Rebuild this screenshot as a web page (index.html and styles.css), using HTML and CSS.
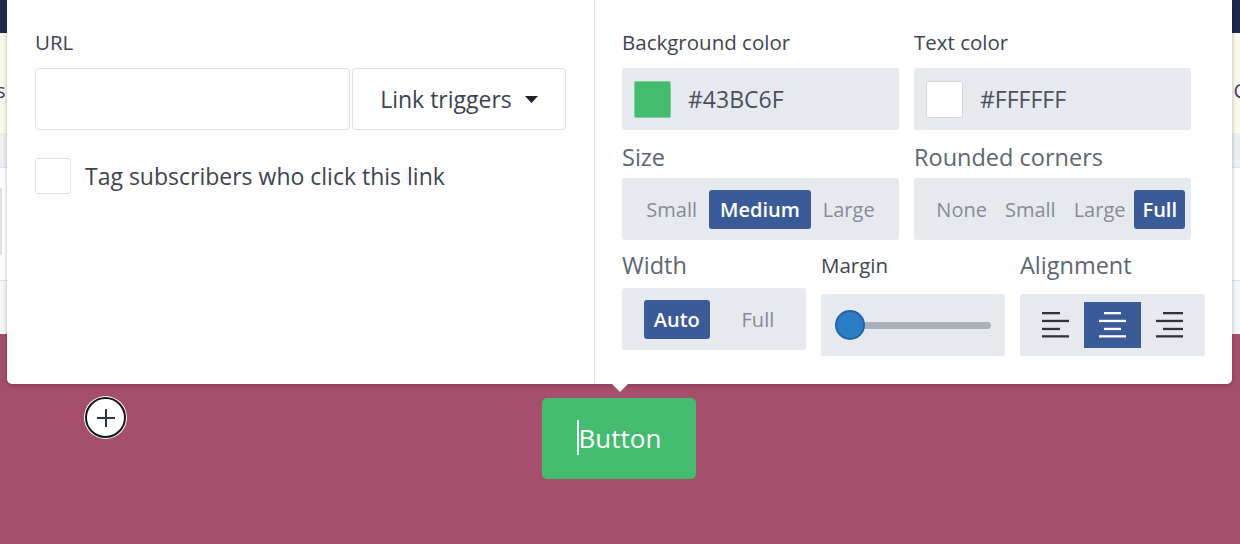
FILE: index.html
```html
<!DOCTYPE html>
<html>
<head>
<meta charset="utf-8">
<link rel="stylesheet" href="styles.css">
</head>
<body>
<div class="page">
  <div class="topbar"></div>
  <div class="notice"><span class="n-left">s</span><span class="n-right">C</span></div>
  <div class="tabs"></div>
  <div class="canvas-top"><div class="card-edge"></div></div>
  <div class="strip"></div>
  <div class="stage">
    <div class="plus-cell">
      <div class="plus">
        <svg width="20" height="20" viewBox="0 0 20 20"><rect x="9" y="1" width="2" height="18" fill="#2e3440"/><rect x="1" y="9" width="18" height="2" fill="#2e3440"/></svg>
      </div>
    </div>
    <div class="cta"><span class="cursor"></span>Button</div>
    <div></div>
  </div>
</div>

<div class="popup">
  <div class="pane-left">
    <div class="lbl">URL</div>
    <div class="url-row">
      <div class="input"></div>
      <div class="trigger"><span>Link triggers</span>
        <svg width="13" height="7" viewBox="0 0 13 7"><path d="M0 0H13L6.5 7Z" fill="#1d2026"/></svg>
      </div>
    </div>
    <div class="check-row"><div class="box"></div><span>Tag subscribers who click this link</span></div>
  </div>
  <div class="pane-right">
    <div class="grid2">
      <div class="col">
        <div class="lbl">Background color</div>
        <div class="field"><div class="swatch sw-green"></div><span>#43BC6F</span></div>
        <div class="lbl-big">Size</div>
        <div class="seg seg-size">
          <span class="opt">Small</span><span class="opt on">Medium</span><span class="opt">Large</span>
        </div>
      </div>
      <div class="col">
        <div class="lbl">Text color</div>
        <div class="field"><div class="swatch sw-white"></div><span>#FFFFFF</span></div>
        <div class="lbl-big">Rounded corners</div>
        <div class="seg seg-corners">
          <span class="opt">None</span><span class="opt">Small</span><span class="opt">Large</span><span class="opt on">Full</span>
        </div>
      </div>
    </div>
    <div class="grid3">
      <div class="col">
        <div class="lbl-big lbl-row3">Width</div>
        <div class="seg seg-width">
          <span class="opt on">Auto</span><span class="opt">Full</span>
        </div>
      </div>
      <div class="col">
        <div class="lbl lbl-row3 lbl-margin">Margin</div>
        <div class="seg seg-low">
          <div class="slider"><div class="track"></div><div class="thumb"></div></div>
        </div>
      </div>
      <div class="col">
        <div class="lbl-big lbl-row3">Alignment</div>
        <div class="seg seg-low seg-align">
          <div class="abtn">
            <svg width="27" height="26" viewBox="0 0 27 26"><g fill="#2f3440"><rect x="0" y="0" width="18" height="2.3"/><rect x="0" y="7.8" width="27" height="2.3"/><rect x="0" y="15.8" width="18" height="2.3"/><rect x="0" y="23.2" width="27" height="2.3"/></g></svg>
          </div>
          <div class="abtn on">
            <svg width="27" height="26" viewBox="0 0 27 26"><g fill="#ffffff"><rect x="5" y="0" width="17" height="2.3"/><rect x="0" y="7.8" width="27" height="2.3"/><rect x="5" y="15.8" width="17" height="2.3"/><rect x="0" y="23.2" width="27" height="2.3"/></g></svg>
          </div>
          <div class="abtn">
            <svg width="27" height="26" viewBox="0 0 27 26"><g fill="#2f3440"><rect x="7" y="0" width="20" height="2.3"/><rect x="0" y="7.8" width="27" height="2.3"/><rect x="7" y="15.8" width="20" height="2.3"/><rect x="0" y="23.2" width="27" height="2.3"/></g></svg>
          </div>
        </div>
      </div>
    </div>
  </div>
</div>
</body>
</html>
```
FILE: styles.css
```css
* { box-sizing: border-box; margin: 0; padding: 0; }
html, body { width: 1240px; height: 544px; overflow: hidden; }
body {
  position: relative;
  font-family: "Open Sans", "Noto Sans", sans-serif;
  background: #fff;
  color: #3f4550;
}
.page { display: flex; flex-direction: column; height: 544px; }
.topbar { height: 33px; background: #1f2b4d; flex: none; }
.notice {
  height: 100px; flex: none; background: #fbf8ec;
  display: flex; align-items: center; justify-content: space-between;
  padding-top: 14px; font-size: 20px; color: #3d4166;
}
.n-left { margin-left: -4px; }
.n-right { margin-right: -6px; }
.tabs { height: 35px; flex: none; background: #edf0f3; border-bottom: 1px solid #dfe3e8; }
.canvas-top { height: 112px; flex: none; background: #fff; padding-top: 20px; }
.card-edge { height: 67px; width: 40px; border-left: 2px solid #dfe3e8; }
.strip { height: 54px; flex: none; background: #f4f6f8; border-top: 1px solid #dfe3e8; }
.stage {
  flex: 1; background: #a64f6c;
  display: grid; grid-template-columns: 542px 154px 1fr;
  align-items: start; padding-top: 64px;
}
.plus-cell { padding-left: 85px; margin-top: -1px; }
.plus {
  width: 41px; height: 41px; border-radius: 50%;
  background: #fff; border: 2px solid #15171c;
  box-shadow: 0 0 0 1px #fff;
  display: flex; align-items: center; justify-content: center;
}
.cta {
  height: 81px; background: #43bc6f; border-radius: 5px;
  color: #fff; font-size: 26px; padding-bottom: 2px;
  display: flex; align-items: center; justify-content: center;
}
.cursor { display: inline-block; width: 0; height: 35px; border-left: 2px solid #fff; }

.popup {
  position: absolute; left: 7px; top: 0; width: 1225px; height: 384px;
  background: #fff; border-radius: 0 0 5px 5px;
  box-shadow: 0 1px 4px rgba(0,0,0,.28);
  display: flex;
}
.popup::after {
  content: ""; position: absolute; left: 605px; top: 384px;
  border-left: 8px solid transparent; border-right: 8px solid transparent;
  border-top: 8px solid #fff;
}
.pane-left { width: 588px; padding: 28px 28px 0; border-right: 1px solid #dfe4ea; }
.pane-right { flex: 1; padding: 28px 0 0 27px; }

.lbl { font-size: 20.5px; line-height: 28px; color: #3f4550; margin-bottom: 12px; }
.lbl-big { font-size: 23.5px; line-height: 30px; color: #5e6572; margin-top: 12px; margin-bottom: 6px; }

.url-row { display: flex; gap: 2px; height: 62px; }
.input { width: 315px; border: 1px solid #dde2e8; border-radius: 4px; background: #fff; }
.trigger {
  width: 214px; border: 1px solid #dde2e8; border-radius: 4px;
  display: flex; align-items: center; justify-content: center; gap: 13px;
  font-size: 23px; color: #3e444f;
}
.check-row { margin-top: 28px; display: flex; align-items: center; gap: 14px; font-size: 23px; color: #3e444f; }
.box { width: 36px; height: 36px; border: 1px solid #dde2e8; border-radius: 3px; }

.grid2 { display: grid; grid-template-columns: 277px 277px; column-gap: 15px; }
.grid3 { display: grid; grid-template-columns: 184px 184px 185px; column-gap: 15px; }
.col { display: flex; flex-direction: column; }
.field {
  height: 62px; background: #e6eaef; border-radius: 3px;
  display: flex; align-items: center; gap: 17px; padding-left: 12px;
  font-size: 23px; color: #4a505b;
}
.swatch { width: 37px; height: 37px; border-radius: 2px; flex: none; }
.sw-green { background: #43bc6f; border: 1px solid #7fcf9d; }
.sw-white { background: #fff; border: 1px solid #d3d8df; }

.seg { height: 62px; background: #e6eaef; border-radius: 3px; display: flex; align-items: center; }
.opt { font-size: 20px; color: #858c96; height: 39px; line-height: 39px; border-radius: 3px; padding: 0 12px; }
.opt.on { background: #3b5b98; color: #fff; font-weight: 600; }
.seg-size { justify-content: center; }
.seg-size .opt.on { padding: 0 11px; }
.seg-corners { justify-content: flex-end; padding-right: 6px; }
.seg-corners .opt { padding: 0 9px; }
.seg-corners .opt.on { padding: 0 8px; }
.seg-width { justify-content: space-evenly; }
.seg-width .opt { padding: 0 10px; }

.lbl-row3 { margin-top: 10px; line-height: 30px; margin-bottom: 0; }
.lbl-margin { font-size: 20.5px; }
.seg-low { margin-top: 14px; }
.seg-width { margin-top: 8px; }

.slider { position: relative; width: 156px; height: 30px; margin-left: 14px; display: flex; align-items: center; }
.track { margin-left: 15px; flex: 1; height: 7px; border-radius: 4px; background: #a9b0ba; }
.thumb {
  position: absolute; left: 0; top: 0; width: 30px; height: 30px; border-radius: 50%;
  background: #2b7dc6; border: 2px solid #2465a6;
}
.seg-align { justify-content: center; }
.abtn { width: 57px; height: 46px; display: flex; align-items: center; justify-content: center; }
.abtn.on { background: #3b5b98; }
```
